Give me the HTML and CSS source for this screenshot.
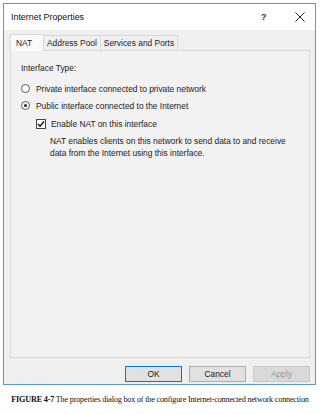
FILE: index.html
```html
<!DOCTYPE html>
<html>
<head>
<meta charset="utf-8">
<link rel="stylesheet" href="styles.css">
</head>
<body>
<div class="window">
  <div class="titlebar">
    <span class="title">Internet Properties</span>
    <span class="help">?</span>
    <span class="close"><svg width="10" height="10" viewBox="0 0 10 10"><path d="M0.5 0.5 L9.5 9.5 M9.5 0.5 L0.5 9.5" stroke="#222" stroke-width="1" fill="none"/></svg></span>
  </div>
  <div class="body">
    <div class="tabs">
      <div class="tab active">NAT</div>
      <div class="tab">Address Pool</div>
      <div class="tab">Services and Ports</div>
    </div>
    <div class="panel">
      <div class="label">Interface Type:</div>
      <div class="option">
        <span class="radio"></span>
        <span>Private interface connected to private network</span>
      </div>
      <div class="option">
        <span class="radio checked"></span>
        <span>Public interface connected to the Internet</span>
      </div>
      <div class="sub">
        <div class="option">
          <span class="check"><svg width="8" height="8" viewBox="0 0 8 8"><path d="M1 4 L3 6.2 L7 1.5" stroke="#111" stroke-width="1.4" fill="none"/></svg></span>
          <span>Enable NAT on this interface</span>
        </div>
        <p class="desc">NAT enables clients on this network to send data to and receive data from the Internet using this interface.</p>
      </div>
    </div>
    <div class="buttons">
      <div class="btn default">OK</div>
      <div class="btn">Cancel</div>
      <div class="btn disabled">Apply</div>
    </div>
  </div>
</div>
<p class="caption"><b>FIGURE 4-7</b> The properties dialog box of the configure Internet-connected network connection</p>
</body>
</html>
```
FILE: styles.css
```css
html, body {
  margin: 0;
  padding: 0;
  background: #fff;
}
body {
  font-family: "Liberation Sans", Arial, sans-serif;
  font-size: 8.4px;
  color: #1a1a1a;
}
.window {
  margin: 3px 0 0 3px;
  width: 311px;
  height: 380px;
  border: 1px solid #5d9acb;
  display: flex;
  flex-direction: column;
  background: #efefef;
}
.titlebar {
  height: 26px;
  background: #fff;
  display: flex;
  align-items: center;
  padding-left: 7px;
}
.title {
  flex: 1;
  font-size: 8.9px;
  color: #111;
}
.help {
  width: 12px;
  font-size: 9px;
  font-weight: bold;
  color: #333;
  margin-right: 22px;
}
.close {
  width: 10px;
  margin-right: 10px;
  display: flex;
}
.body {
  flex: 1;
  display: flex;
  flex-direction: column;
  padding: 4px 5px 0 6px;
}
.tabs {
  display: flex;
  height: 16px;
  align-items: flex-end;
}
.tab {
  height: 15px;
  line-height: 14px;
  padding: 0 3px;
  border: 1px solid #d9d9d9;
  border-bottom: none;
  margin-left: -1px;
  background: #f0f0f0;
  box-sizing: border-box;
}
.tab:first-child {
  margin-left: 0;
}
.tab.active {
  height: 17px;
  line-height: 16px;
  background: #fafafa;
  width: 34px;
  padding-left: 5px;
  position: relative;
  z-index: 1;
  margin-bottom: -1px;
}
.panel {
  height: 308px;
  border: 1px solid #d9d9d9;
  background: #f2f2f2;
  padding: 12px 10px;
  box-sizing: border-box;
}
.label {
  margin-bottom: 7px;
}
.option {
  display: flex;
  align-items: center;
  height: 17px;
}
.radio {
  width: 7px;
  height: 7px;
  border: 1px solid #555;
  border-radius: 50%;
  margin-right: 6px;
  background: #fff;
  position: relative;
}
.radio.checked::after {
  content: "";
  position: absolute;
  left: 2px;
  top: 2px;
  width: 3px;
  height: 3px;
  border-radius: 50%;
  background: #222;
}
.sub {
  padding-left: 15px;
  margin-top: 1px;
}
.check {
  width: 8px;
  height: 8px;
  border: 1px solid #444;
  background: #fff;
  margin-right: 5px;
  display: flex;
}
.desc {
  margin: 3px 0 0 14px;
  line-height: 12px;
  width: 238px;
}
.buttons {
  display: flex;
  justify-content: flex-end;
  gap: 7px;
  margin-top: 8px;
}
.btn {
  width: 55px;
  height: 14px;
  line-height: 14px;
  text-align: center;
  border: 1px solid #adadad;
  background: #e1e1e1;
}
.btn.default {
  border: 1px solid #0078d7;
}
.btn.disabled {
  color: #9a9a9a;
  border-color: #c8c8c8;
  background: #d9d9d9;
}
.caption {
  margin: 10px 0 0 0;
  text-align: center;
  white-space: nowrap;
  font-family: "Liberation Serif", serif;
  font-size: 8.2px;
  letter-spacing: -0.2px;
  color: #111;
}
```
